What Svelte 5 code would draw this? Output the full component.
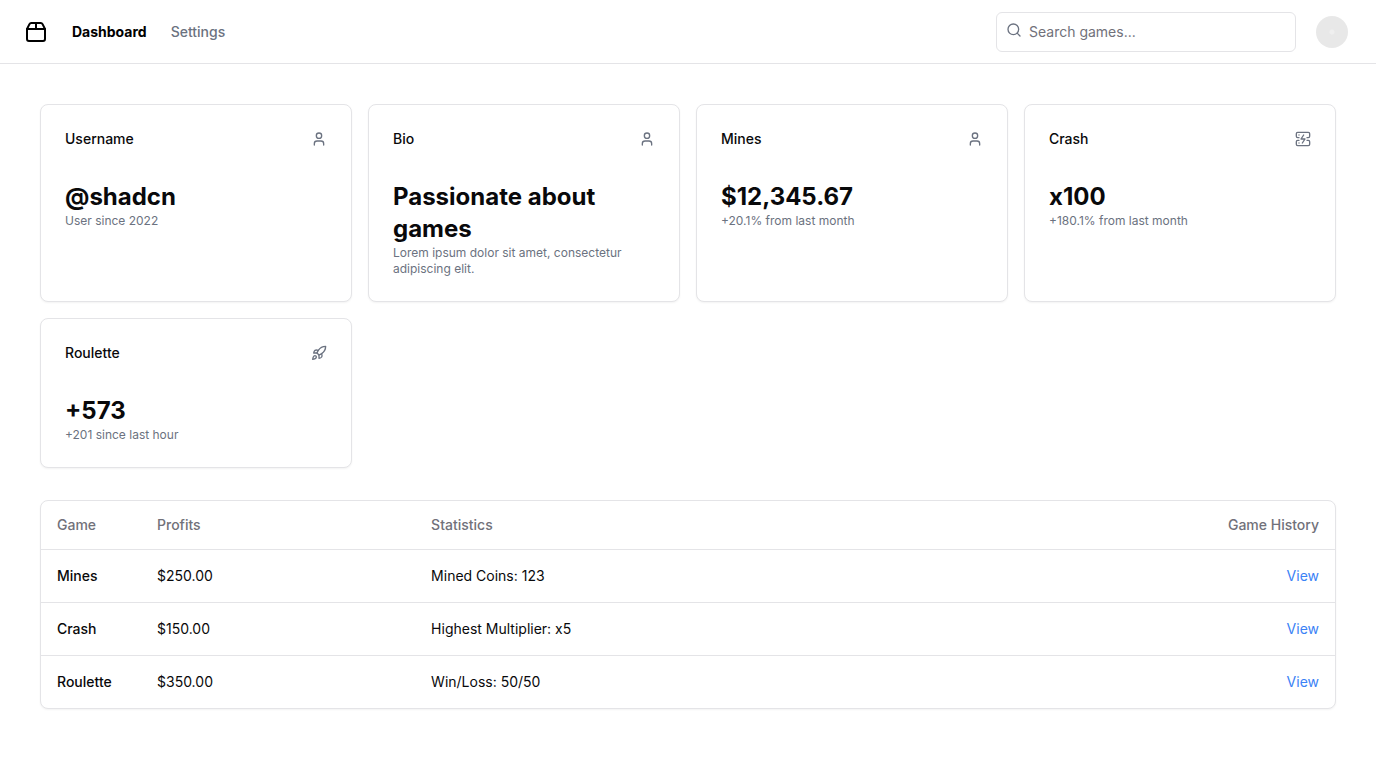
<script>
  const cards = [
    { title: 'Username', icon: 'user', value: '@shadcn', note: 'User since 2022' },
    { title: 'Bio', icon: 'user', value: 'Passionate about games', note: 'Lorem ipsum dolor sit amet, consectetur adipiscing elit.' },
    { title: 'Mines', icon: 'user', value: '$12,345.67', note: '+20.1% from last month' },
    { title: 'Crash', icon: 'crash', value: 'x100', note: '+180.1% from last month' },
    { title: 'Roulette', icon: 'rocket', value: '+573', note: '+201 since last hour' },
  ];
  const rows = [
    { game: 'Mines', profits: '$250.00', stats: 'Mined Coins: 123' },
    { game: 'Crash', profits: '$150.00', stats: 'Highest Multiplier: x5' },
    { game: 'Roulette', profits: '$350.00', stats: 'Win/Loss: 50/50' },
  ];
  const icons = {
    package: ['M3 9h18v10a2 2 0 0 1-2 2H5a2 2 0 0 1-2-2V9Z', 'm3 9 2.45-4.9A2 2 0 0 1 7.24 3h9.52a2 2 0 0 1 1.8 1.1L21 9', 'M12 3v6'],
    search: ['M3 11a8 8 0 1 0 16 0a8 8 0 1 0-16 0', 'm21 21-4.3-4.3'],
    user: ['M19 21v-2a4 4 0 0 0-4-4H9a4 4 0 0 0-4 4v2', 'M8 7a4 4 0 1 0 8 0a4 4 0 1 0-8 0'],
    crash: [
      'M6 10H4a2 2 0 0 1-2-2V4a2 2 0 0 1 2-2h16a2 2 0 0 1 2 2v4a2 2 0 0 1-2 2h-2',
      'M6 14H4a2 2 0 0 0-2 2v4a2 2 0 0 0 2 2h16a2 2 0 0 0 2-2v-4a2 2 0 0 0-2-2h-2',
      'M6 6h.01', 'M6 18h.01', 'm13 6-4 6h6l-4 6',
    ],
    rocket: [
      'M4.5 16.5c-1.5 1.26-2 5-2 5s3.74-.5 5-2c.71-.84.7-2.13-.09-2.91a2.18 2.18 0 0 0-2.91-.09z',
      'm12 15-3-3a22 22 0 0 1 2-3.95A12.88 12.88 0 0 1 22 2c0 2.72-.78 7.5-6 11a22.35 22.35 0 0 1-4 2z',
      'M9 12H4s.55-3.03 2-4c1.62-1.08 5 0 5 0', 'M12 15v5s3.03-.55 4-2c1.08-1.62 0-5 0-5',
    ],
  };
</script>

{#snippet icon(name)}
  <svg class="icon {name}" viewBox="0 0 24 24" aria-hidden="true">
    {#each icons[name] as d}<path {d} />{/each}
  </svg>
{/snippet}

<div class="page">
  <header>
    <nav>
      <a class="logo" href="#home" aria-label="Home">{@render icon('package')}</a>
      <a class="active" href="#dashboard">Dashboard</a>
      <a href="#settings">Settings</a>
    </nav>
    <div class="tools">
      <form class="search" role="search">
        {@render icon('search')}
        <input type="search" placeholder="Search games..." aria-label="Search games" />
      </form>
      <button class="account" type="button" aria-label="Account"><span class="avatar"></span></button>
    </div>
  </header>

  <main>
    <section class="cards">
      {#each cards as card}
        <article class="card">
          <div class="head">
            <h2>{card.title}</h2>
            {@render icon(card.icon)}
          </div>
          <div class="body">
            <div class="value">{card.value}</div>
            <p>{card.note}</p>
          </div>
        </article>
      {/each}
    </section>

    <div class="panel">
      <table>
        <thead>
          <tr>
            <th class="game" scope="col">Game</th>
            <th class="profits" scope="col">Profits</th>
            <th scope="col">Statistics</th>
            <th class="end" scope="col">Game History</th>
          </tr>
        </thead>
        <tbody>
          {#each rows as row}
            <tr>
              <td class="name">{row.game}</td>
              <td>{row.profits}</td>
              <td>{row.stats}</td>
              <td class="end"><a href="#history">View</a></td>
            </tr>
          {/each}
        </tbody>
      </table>
    </div>
  </main>
</div>

<style>
  :global(body) {
    margin: 0;
    background: #fff;
    color: #09090b;
    font-family: Inter, sans-serif;
    font-size: 14px;
    line-height: 20px;
  }
  .page, .page :global(*) { box-sizing: border-box; }
  a { color: inherit; text-decoration: none; }
  h2, p { margin: 0; }

  .icon {
    display: block;
    flex: none;
    width: 16px;
    height: 16px;
    fill: none;
    stroke: #6b7280;
    stroke-width: 2;
    stroke-linecap: round;
    stroke-linejoin: round;
  }
  .icon.package { width: 24px; height: 24px; stroke: #000; }

  header {
    display: flex;
    align-items: center;
    justify-content: space-between;
    height: 64px;
    padding: 0 24px;
    border-bottom: 1px solid #e4e4e7;
  }
  nav { display: flex; align-items: center; gap: 24px; font-weight: 500; color: #6b7280; }
  nav .active { color: #000; font-weight: 700; }
  .tools { display: flex; align-items: center; gap: 16px; }
  .search { position: relative; }
  .search .icon { position: absolute; left: 10px; top: 10px; }
  .search input {
    display: block;
    width: 300px;
    height: 40px;
    padding: 8px 12px 8px 32px;
    border: 1px solid #e4e4e7;
    border-radius: 6px;
    background: #fff;
    font: inherit;
    color: inherit;
    appearance: none;
  }
  .search input::placeholder { color: #71717a; opacity: 1; }
  .account {
    display: grid;
    place-items: center;
    width: 40px;
    height: 40px;
    padding: 0;
    border: 0;
    border-radius: 50%;
    background: none;
  }
  .avatar {
    width: 32px;
    height: 32px;
    border-radius: 50%;
    background: radial-gradient(circle, #efefef 0 2px, #e8e8e8 3px);
  }

  main { display: grid; gap: 32px; padding: 40px; }
  .cards { display: grid; grid-template-columns: repeat(4, 1fr); gap: 16px; }
  .card, .panel {
    border: 1px solid #e4e4e7;
    border-radius: 8px;
    background: #fff;
    box-shadow: 0 1px 2px rgb(0 0 0 / 0.05);
  }
  .head { display: flex; align-items: center; justify-content: space-between; padding: 24px 24px 8px; }
  h2 { font-size: 14px; font-weight: 500; }
  .body { padding: 24px; }
  .value { font-size: 24px; line-height: 32px; font-weight: 700; }
  p { font-size: 12px; line-height: 16px; color: #6b7280; }

  .panel { overflow: hidden; }
  table { width: 100%; border-collapse: collapse; }
  th, td { padding: 16px; text-align: left; }
  th { height: 48px; padding: 0 16px; font-weight: 500; color: #71717a; }
  thead tr, tbody tr:not(:last-child) { border-bottom: 1px solid #e4e4e7; }
  .game { width: 100px; }
  .name { font-weight: 500; }
  .end { text-align: right; }
  td a { color: #3b82f6; }

  @media (max-width: 1000px) {
    .cards { grid-template-columns: repeat(2, 1fr); }
    .search input { width: 200px; }
  }
</style>
